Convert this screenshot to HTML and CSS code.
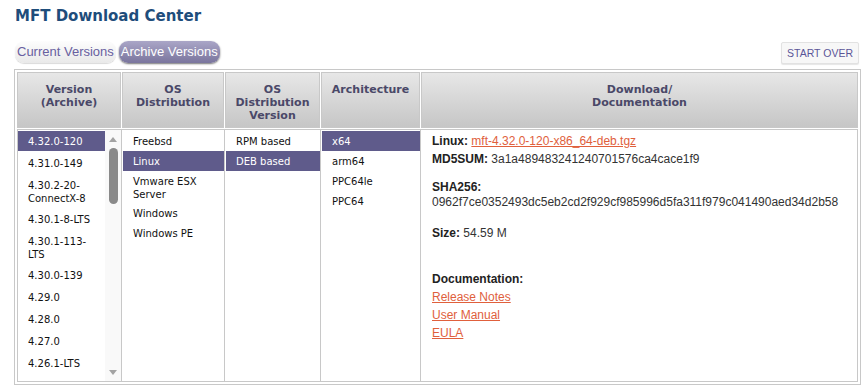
FILE: index.html
```
<!DOCTYPE html>
<html lang="en">
<head>
    <meta charset="UTF-8">
    <title>MFT Download Center</title>
    <link rel="stylesheet" href="styles.css">
</head>
<body>
    <div class="page">
        <h1 class="title">MFT Download Center</h1>

        <!-- version tabs + reset -->
        <div class="toolbar">
            <div class="tabs">
                <span class="tab">Current Versions</span>
                <span class="tab tab-active">Archive Versions</span>
            </div>
            <button class="start-over">START OVER</button>
        </div>

        <div class="grid">
            <div class="grid-head">
                <div class="th c1">Version<br>(Archive)</div>
                <div class="th c2">OS<br>Distribution</div>
                <div class="th c3">OS<br>Distribution<br>Version</div>
                <div class="th c4">Architecture</div>
                <div class="th c5">Download/<br>Documentation</div>
            </div>

            <div class="grid-body">
                <div class="col b1">
                    <ul class="list versions">
                        <li class="selected">4.32.0-120</li>
                        <li>4.31.0-149</li>
                        <li>4.30.2-20-<br>ConnectX-8</li>
                        <li>4.30.1-8-LTS</li>
                        <li>4.30.1-113-<br>LTS</li>
                        <li>4.30.0-139</li>
                        <li>4.29.0</li>
                        <li>4.28.0</li>
                        <li>4.27.0</li>
                        <li>4.26.1-LTS</li>
                    </ul>
                    <div class="scrollbar">
                        <span class="arrow-up"></span>
                        <span class="thumb"></span>
                        <span class="arrow-down"></span>
                    </div>
                </div>
                <div class="col b2">
                    <ul class="list">
                        <li>Freebsd</li>
                        <li class="selected">Linux</li>
                        <li>Vmware ESX<br>Server</li>
                        <li>Windows</li>
                        <li>Windows PE</li>
                    </ul>
                </div>
                <div class="col b3">
                    <ul class="list">
                        <li>RPM based</li>
                        <li class="selected">DEB based</li>
                    </ul>
                </div>
                <div class="col b4">
                    <ul class="list">
                        <li class="selected">x64</li>
                        <li>arm64</li>
                        <li>PPC64le</li>
                        <li>PPC64</li>
                    </ul>
                </div>
                <div class="col b5 details">
                    <div class="row"><b>Linux:</b> <a href="#">mft-4.32.0-120-x86_64-deb.tgz</a></div>
                    <div class="row"><b>MD5SUM:</b> 3a1a489483241240701576ca4cace1f9</div>
                    <div class="sha">
                        <b>SHA256:</b><br>
                        0962f7ce0352493dc5eb2cd2f929cf985996d5fa311f979c041490aed34d2b58
                    </div>
                    <div class="row size"><b>Size:</b> 54.59 M</div>
                    <div class="docs">
                        <div class="row"><b>Documentation:</b></div>
                        <div class="row"><a href="#">Release Notes</a></div>
                        <div class="row"><a href="#">User Manual</a></div>
                        <div class="row"><a href="#">EULA</a></div>
                    </div>
                </div>
            </div>
        </div>
    </div>
</body>
</html>
```

FILE: styles.css
```
body {
    margin: 0;
    background-color: #fff;
    font-family: "DejaVu Sans", Verdana, sans-serif;
}

.page {
    width: 847px;
    padding-left: 14px;
}

.title {
    margin: 0;
    padding: 7px 0 0 1px;
    font-size: 15px;
    line-height: 18px;
    font-weight: bold;
    color: #1e4d7b;
}

/* tabs row */
.toolbar {
    display: flex;
    justify-content: space-between;
    align-items: flex-start;
    margin-top: 16px;
    height: 22px;
}

.tabs {
    display: flex;
    gap: 3px;
    margin-left: 1px;
}

.tab {
    height: 22px;
    line-height: 22px;
    padding: 0 2px;
    border-radius: 9px;
    font-family: "Liberation Sans", Arial, sans-serif;
    font-size: 13px;
    color: #6860a0;
    background: linear-gradient(#fdfdfd, #e9e9e9);
    box-shadow: 0 1px 1px rgba(0, 0, 0, 0.15);
}

.tab-active {
    color: #fff;
    background: linear-gradient(#aaa6c7, #7a759d);
    box-shadow: 0 1px 2px rgba(0, 0, 0, 0.55);
}

.start-over {
    margin: 1px 2px 0 0;
    height: 22px;
    padding: 0 5px;
    border: 1px solid #e2e2e2;
    border-radius: 2px;
    background-color: #f7f7f7;
    box-shadow: 0 1px 1px rgba(0, 0, 0, 0.1);
    font-family: "Liberation Sans", Arial, sans-serif;
    font-size: 10.5px;
    color: #5a5597;
}

/* table */
.grid {
    margin-top: 6px;
    border: 1px solid #c8c8c8;
    padding: 2px;
}

.grid-head {
    display: flex;
    gap: 1px;
    height: 56px;
}

.th {
    box-sizing: border-box;
    border: 1px solid #c8c8c8;
    background: linear-gradient(#e7e7e7, #c6c6c6);
    padding-top: 10px;
    text-align: center;
    font-size: 11px;
    line-height: 13px;
    font-weight: bold;
    color: #4a4868;
}

.c1 { width: 104px; }
.c2 { width: 102px; }
.c3 { width: 95px; }
.c4 { width: 99px; }
.c5 { flex: 1; }

.grid-body {
    display: flex;
    box-sizing: border-box;
    height: 253px;
    margin-top: 1px;
    border: 1px solid #c8c8c8;
}

.col {
    box-sizing: border-box;
}

.col + .col {
    border-left: 1px solid #c8c8c8;
}

.b1 { width: 103px; display: flex; }
.b2 { width: 103px; }
.b3 { width: 96px; }
.b4 { width: 100px; }
.b5 { flex: 1; }

.list {
    list-style: none;
    margin: 0;
    padding: 1px 0 0 1px;
    font-size: 10px;
    line-height: 13px;
    color: #111;
}

.list li {
    min-height: 14px;
    padding: 4px 10px 2px;
}

.list li.selected {
    background-color: #5f5b8b;
    color: #fff;
}

.versions {
    width: 87px;
    padding-left: 0;
    overflow: hidden;
}

.versions li {
    margin-bottom: 2px;
}

/* fake scrollbar of the version list */
.scrollbar {
    width: 16px;
    display: flex;
    flex-direction: column;
    align-items: center;
    background-color: #f9f9f9;
}

.arrow-up {
    margin-top: 7px;
    border-left: 4px solid transparent;
    border-right: 4px solid transparent;
    border-bottom: 5px solid #a3a3a3;
}

.thumb {
    margin-top: 6px;
    width: 9px;
    height: 56px;
    border-radius: 5px;
    background-color: #8a8a8a;
}

.arrow-down {
    margin-top: auto;
    margin-bottom: 6px;
    border-left: 4px solid transparent;
    border-right: 4px solid transparent;
    border-top: 5px solid #a3a3a3;
}

/* download details */
.details {
    padding: 2px 11px;
    font-family: "Liberation Sans", Arial, sans-serif;
    font-size: 12px;
    color: #333;
}

.details b {
    color: #222;
}

.details a {
    color: #e0603c;
}

.row {
    line-height: 18px;
}

.sha {
    margin-top: 12px;
    line-height: 15px;
}

.size {
    margin-top: 14px;
}

.docs {
    margin-top: 28px;
}
```
